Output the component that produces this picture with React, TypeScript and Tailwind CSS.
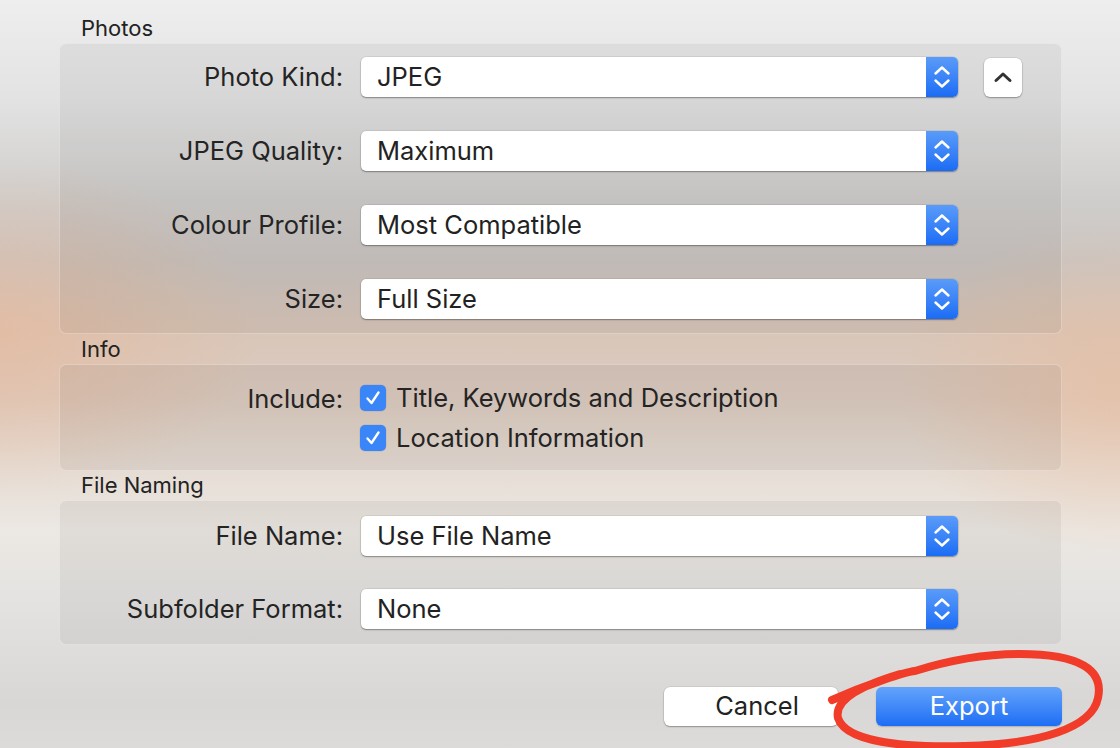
import React from "react";

const FONT = "font-['Inter','Noto_Sans',sans-serif]";

function Stepper() {
  return (
    <div className="flex w-[32px] items-center justify-center rounded-r-[5px] bg-gradient-to-b from-[#5a9bf9] to-[#1a6cf5]">
      <svg width="18" height="26" viewBox="0 0 18 26" fill="none">
        <path d="M2.5 9.5 L9 3.5 L15.5 9.5" stroke="white" strokeWidth="2.4" strokeLinecap="round" strokeLinejoin="round" />
        <path d="M2.5 16.5 L9 22.5 L15.5 16.5" stroke="white" strokeWidth="2.4" strokeLinecap="round" strokeLinejoin="round" />
      </svg>
    </div>
  );
}

function Select({ value }: { value: string }) {
  return (
    <div className="flex h-[40px] w-[597px] rounded-[5px] bg-white shadow-[0_1px_1.5px_rgba(0,0,0,0.35),0_0_0_0.5px_rgba(0,0,0,0.12)]">
      <span className="flex-1 pl-[16px] text-[25.5px] leading-[40px] text-[#222]">{value}</span>
      <Stepper />
    </div>
  );
}

function Row({ label, value, extra }: { label: string; value: string; extra?: React.ReactNode }) {
  return (
    <div className="flex h-[40px] items-center">
      <span className="w-[283px] whitespace-nowrap text-right text-[25.5px] text-[#242424]">{label}</span>
      <div className="ml-[18px]">
        <Select value={value} />
      </div>
      {extra}
    </div>
  );
}

function Check({ label }: { label: string }) {
  return (
    <div className="flex h-[40px] items-center">
      <span className="flex h-[26px] w-[26px] items-center justify-center rounded-[5px] bg-[#3a85f7] shadow-[0_0_0_0.5px_rgba(0,0,0,0.1)]">
        <svg width="18" height="18" viewBox="0 0 18 18" fill="none">
          <path d="M3.5 9.5 L7.5 14 L14.5 3.5" stroke="white" strokeWidth="2.4" strokeLinecap="round" strokeLinejoin="round" />
        </svg>
      </span>
      <span className="ml-[10px] whitespace-nowrap text-[25.5px] text-[#242424]">{label}</span>
    </div>
  );
}

function Panel({ className, children }: { className: string; children: React.ReactNode }) {
  return (
    <div className={`rounded-[7px] border border-white/30 bg-black/[0.05] ${className}`}>{children}</div>
  );
}

function GroupLabel({ text, h }: { text: string; h: string }) {
  return (
    <div className={`flex items-center pl-[22px] text-[22px] text-[#222] ${h}`}>{text}</div>
  );
}

export default function App() {
  return (
    <div
      className={`relative h-[748px] w-[1120px] overflow-hidden ${FONT} bg-[radial-gradient(ellipse_260px_170px_at_0%_44%,rgba(236,180,145,0.5),transparent),radial-gradient(ellipse_220px_170px_at_100%_52%,rgba(236,185,150,0.5),transparent),linear-gradient(180deg,#eeeeee_0%,#e3e3e3_13%,#cfcdcb_27%,#cbc5c1_35%,#d8c6b9_44%,#dccbbf_53%,#e6ddd5_63%,#ece8e3_71%,#e4e3e1_80%,#d8d7d5_94%,#dcdbd9_100%)]`}
    >
      <div className="ml-[59px] w-[1003px] pt-[13px]">
        <GroupLabel text="Photos" h="h-[30px]" />
        <Panel className="flex h-[291px] flex-col gap-[34px] pt-[13px]">
          <Row
            label="Photo Kind:"
            value="JPEG"
            extra={
              <div className="ml-[26px] flex h-[39px] w-[38px] items-center justify-center rounded-[6px] bg-white shadow-[0_1px_1.5px_rgba(0,0,0,0.3),0_0_0_0.5px_rgba(0,0,0,0.12)]">
                <svg width="20" height="12" viewBox="0 0 20 12" fill="none">
                  <path d="M3 9.5 L10 3 L17 9.5" stroke="#333" strokeWidth="3" strokeLinecap="round" strokeLinejoin="round" />
                </svg>
              </div>
            }
          />
          <Row label="JPEG Quality:" value="Maximum" />
          <Row label="Colour Profile:" value="Most Compatible" />
          <Row label="Size:" value="Full Size" />
        </Panel>
        <GroupLabel text="Info" h="h-[30px]" />
        <Panel className="flex h-[107px] pt-[13px]">
          <span className="w-[283px] pt-[2px] text-right text-[25.5px] text-[#242424]">Include:</span>
          <div className="ml-[17px] flex flex-col">
            <Check label="Title, Keywords and Description" />
            <Check label="Location Information" />
          </div>
        </Panel>
        <GroupLabel text="File Naming" h="h-[29px]" />
        <Panel className="flex h-[145px] flex-col gap-[33px] pt-[15px]">
          <Row label="File Name:" value="Use File Name" />
          <Row label="Subfolder Format:" value="None" />
        </Panel>
        <div className="mt-[42px] flex justify-end gap-[38px]">
          <button className="h-[39px] w-[174px] rounded-[6px] bg-white pl-[12px] text-[25.5px] text-[#222] shadow-[0_1px_1.5px_rgba(0,0,0,0.3),0_0_0_0.5px_rgba(0,0,0,0.12)]">
            Cancel
          </button>
          <button className="h-[39px] w-[186px] rounded-[6px] bg-gradient-to-b from-[#63a3fa] to-[#1c6df5] text-[25.5px] text-white shadow-[0_1px_1.5px_rgba(0,0,0,0.2)]">
            Export
          </button>
        </div>
      </div>

      {/* red annotation ring */}
      <svg className="pointer-events-none absolute inset-0" width="1120" height="748" viewBox="0 0 1120 748" fill="none">
        <path
          d="M832 700 C 868 684, 905 672, 915 671 C 950 660, 985 654, 1020 654 C 1080 654, 1104 670, 1098 698 C 1092 728, 1040 744, 965 746 C 895 748, 845 740, 838 718 C 834 700, 860 686, 900 674"
          stroke="#f03c28"
          strokeWidth="8"
          strokeLinecap="round"
          strokeLinejoin="round"
        />
      </svg>
    </div>
  );
}
